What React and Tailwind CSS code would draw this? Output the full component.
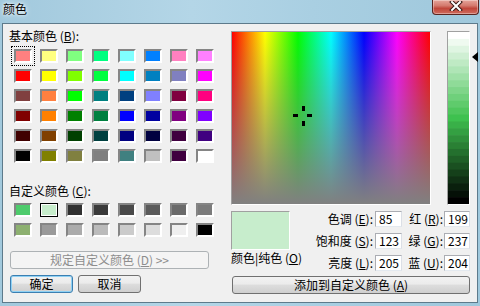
import React from "react";

const basic = [
  "#FF8080","#FFFF80","#80FF80","#00FF80","#80FFFF","#0080FF","#FF80C0","#FF80FF",
  "#FF0000","#FFFF00","#80FF00","#00FF40","#00FFFF","#0080C0","#8080C0","#FF00FF",
  "#804040","#FF8040","#00FF00","#008080","#004080","#8080FF","#800040","#FF0080",
  "#800000","#FF8000","#008000","#008040","#0000FF","#0000A0","#800080","#8000FF",
  "#400000","#804000","#004000","#004040","#000080","#000040","#400040","#400080",
  "#000000","#808000","#808040","#808080","#408080","#C0C0C0","#400040","#FFFFFF",
];

const custom = [
  "#4ECB6C","#C7EDCC","#303030","#3B3B3B","#4A4A4A","#5B5B5B","#6B6B6B","#7B7B7B",
  "#8DB070","#9A9A9A","#ABABAB","#BBBBBB","#CBCBCB","#DDDDDD","#EFEFEF","#000000",
];

const rows = [
  ["色调", "E", "85", "红", "R", "199"],
  ["饱和度", "S", "123", "绿", "G", "237"],
  ["亮度", "L", "205", "蓝", "U", "204"],
];

function Swatch({ c, focus, selected }) {
  return (
    <div className="relative w-[18px] h-[14px]">
      <div
        className={
          selected
            ? "w-full h-full border border-black shadow-[inset_0_0_0_1px_#ffffff]"
            : "w-full h-full border-2 border-t-[#858585] border-l-[#858585] border-r-white border-b-white"
        }
        style={{ background: c }}
      />
      {focus && (
        <div className="absolute -left-[3px] -top-[3px] w-[24px] h-[20px] border border-dotted border-black" />
      )}
    </div>
  );
}

function Field({ v }) {
  return (
    <div className="h-[16px] bg-white border border-[#abadb3] border-b-[#e3e9ef] border-r-[#dbdfe6] pl-[3px] text-[12px] leading-[14px]">
      {v}
    </div>
  );
}

const btn =
  "h-[18px] rounded-[3px] border border-[#707070] bg-[linear-gradient(#f2f2f2,#ebebeb_45%,#dddddd_50%,#cfcfcf)] flex items-center justify-center text-[12px] leading-none text-black";

export default function App() {
  const bands = Array.from({ length: 25 }, (_, i) => 100 - (i * 100) / 24);
  return (
    <div className="w-[480px] h-[306px] overflow-hidden flex flex-col bg-[linear-gradient(to_right,#a2c9dd,#b4d6e7_40%,#a9cfe2_65%,#9fc8dc)] font-['Noto_Sans_CJK_SC','Noto_Sans',sans-serif] text-black">
      {/* title bar */}
      <div className="h-[23px] flex items-start">
        <div className="pl-[3px] pt-[1px] text-[12px] leading-[16px] text-black [text-shadow:0_0_6px_#ffffff,0_0_3px_#ffffff]">
          颜色
        </div>
        <div className="ml-auto mr-[1px] w-[47px] h-[15px] rounded-b-[4px] border border-t-0 border-[#5a2520] bg-[linear-gradient(#e6a59b,#d47a6e_40%,#c0463a_60%,#cf6c5e)] flex justify-center items-start pt-[1px] shadow-[inset_0_0_0_1px_rgba(255,255,255,0.35)]">
          <svg width="14" height="10" viewBox="0 0 14 10">
            <path d="M3 1 L11 9 M11 1 L3 9" stroke="#3a1a16" strokeWidth="4" strokeLinecap="square" />
            <path d="M3 1 L11 9 M11 1 L3 9" stroke="#ffffff" strokeWidth="2" strokeLinecap="square" />
          </svg>
        </div>
      </div>

      {/* client */}
      <div className="mx-[2px] h-[280px] border border-[#5d7a8b] bg-[#f0f0f0] flex pl-[6px] pt-[4px]">
        {/* left column */}
        <div className="w-[201px] flex flex-col">
          <div className="h-[16px] text-[12px] leading-[16px] whitespace-nowrap">
            基本颜色 (<u>B</u>):
          </div>
          <div className="mt-[5px] ml-[5px] grid grid-cols-[repeat(8,18px)] gap-x-[8px] gap-y-[6px]">
            {basic.map((c, i) => (
              <Swatch key={i} c={c} focus={i === 0} />
            ))}
          </div>
          <div className="mt-[20px] h-[16px] text-[12px] leading-[16px] whitespace-nowrap">
            自定义颜色 (<u>C</u>):
          </div>
          <div className="mt-[4px] ml-[5px] grid grid-cols-[repeat(8,18px)] gap-x-[8px] gap-y-[6px]">
            {custom.map((c, i) => (
              <Swatch key={i} c={c} selected={i === 1} />
            ))}
          </div>
          <div className="mt-[14px] ml-[1px] w-[199px] h-[18px] rounded-[3px] border border-[#adb2b5] bg-[#f4f4f4] flex items-center justify-center text-[12px] leading-none text-[#8d8d8d] whitespace-nowrap">
            规定自定义颜色 (<u>D</u>) &gt;&gt;
          </div>
          <div className="mt-[6px] ml-[1px] flex gap-[5px]">
            <div className="w-[63px] h-[18px] rounded-[3px] border border-[#3c7fb1] bg-[linear-gradient(#f2f2f2,#ebebeb_45%,#dddddd_50%,#cfcfcf)] shadow-[inset_0_0_0_1px_#8fd1f4] flex items-center justify-center text-[12px] leading-none">
              确定
            </div>
            <div className={btn + " w-[63px]"}>取消</div>
          </div>
        </div>

        {/* right column */}
        <div className="ml-[21px] pt-[3px] flex flex-col">
          <div className="relative flex">
            <div className="relative w-[200px] h-[174px] border border-t-[#a0a0a0] border-l-[#a0a0a0] border-r-white border-b-white">
              <svg width="198" height="172" className="block">
                <defs>
                  <linearGradient id="hue" x1="0" y1="0" x2="1" y2="0">
                    <stop offset="0" stopColor="#ff0000" />
                    <stop offset="0.1667" stopColor="#ffff00" />
                    <stop offset="0.3333" stopColor="#00ff00" />
                    <stop offset="0.5" stopColor="#00ffff" />
                    <stop offset="0.6667" stopColor="#0000ff" />
                    <stop offset="0.8333" stopColor="#ff00ff" />
                    <stop offset="1" stopColor="#ff0000" />
                  </linearGradient>
                  <linearGradient id="sat" x1="0" y1="0" x2="0" y2="1">
                    <stop offset="0" stopColor="#808080" stopOpacity="0" />
                    <stop offset="1" stopColor="#808080" stopOpacity="1" />
                  </linearGradient>
                </defs>
                <rect width="198" height="172" fill="url(#hue)" />
                <rect width="198" height="172" fill="url(#sat)" />
              </svg>
              <svg width="21" height="21" viewBox="0 0 21 21" className="absolute left-[61px] top-[74px]">
                <rect x="9" y="0" width="3" height="5" fill="#000" />
                <rect x="9" y="15" width="3" height="5" fill="#000" />
                <rect x="0" y="8" width="5" height="3" fill="#000" />
                <rect x="14" y="8" width="5" height="3" fill="#000" />
              </svg>
            </div>
            <div className="ml-[16px] w-[23px] h-[174px] border border-t-[#a0a0a0] border-l-[#a0a0a0] border-r-white border-b-white">
              <svg width="21" height="172" className="block">
                {bands.map((l, i) => (
                  <rect key={i} x="0" y={(i * 172) / 25} width="21" height={172 / 25 + 0.6} fill={`hsl(127.5, 51%, ${l}%)`} />
                ))}
              </svg>
            </div>
            <div className="absolute left-[241px] top-[21px] w-0 h-0 border-y-[5px] border-y-transparent border-r-[6px] border-r-black" />
          </div>

          <div className="mt-[6px] flex">
            <div className="w-[59px] flex flex-col">
              <div className="h-[39px] bg-[#c7edcc] border border-t-[#a0a0a0] border-l-[#a0a0a0] border-r-white border-b-white" />
              <div className="h-[16px] text-[12px] leading-[16px] whitespace-nowrap">
                颜色|纯色 (<u>O</u>)
              </div>
            </div>
            <div className="flex flex-col gap-[6px]">
              {rows.map((r) => (
                <div key={r[0]} className="flex items-center h-[16px]">
                  <div className="w-[83px] text-right text-[12px] leading-[16px] whitespace-nowrap">
                    {r[0]} (<u>{r[1]}</u>):
                  </div>
                  <div className="ml-[2px] w-[27px]">
                    <Field v={r[2]} />
                  </div>
                  <div className="w-[41px] text-right text-[12px] leading-[16px] whitespace-nowrap">
                    {r[3]} (<u>{r[4]}</u>):
                  </div>
                  <div className="ml-[1px] w-[26px]">
                    <Field v={r[5]} />
                  </div>
                </div>
              ))}
            </div>
          </div>

          <div className={btn + " mt-[5px] ml-[1px] w-[238px] whitespace-nowrap"}>
            添加到自定义颜色 (<u>A</u>)
          </div>
        </div>
      </div>
    </div>
  );
}
